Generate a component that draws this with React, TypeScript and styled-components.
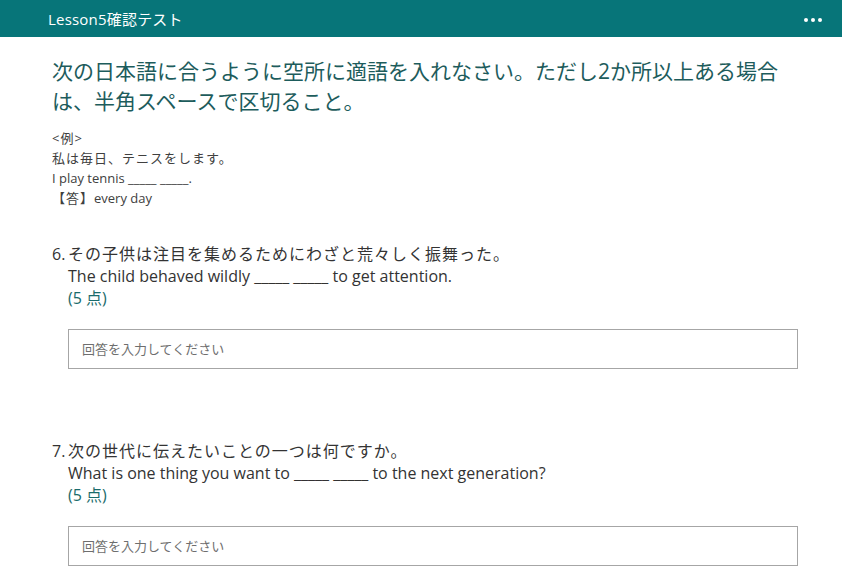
import React from 'react';
import styled, { createGlobalStyle } from 'styled-components';

const GlobalStyle = createGlobalStyle`
  html, body {
    margin: 0;
    padding: 0;
    background: #ffffff;
    font-family: "Segoe UI", "Open Sans", "Noto Sans CJK JP", sans-serif;
  }
`;

const Page = styled.div`
  width: 842px;
  min-height: 582px;
  overflow: hidden;
`;

const Header = styled.header`
  height: 37px;
  background: #077579;
  display: flex;
  align-items: center;
  justify-content: space-between;
  padding: 0 20px 0 48px;
  color: #ffffff;
`;

const Title = styled.div`
  font-size: 15px;
  letter-spacing: 0.2px;
`;

const MoreButton = styled.div`
  display: flex;
  gap: 3px;
  align-items: center;
  padding-top: 2px;
`;

const Dot = styled.span`
  width: 4px;
  height: 4px;
  border-radius: 50%;
  background: #ffffff;
`;

const Body = styled.main`
  padding: 19px 45px 0 52px;
`;

const Heading = styled.h1`
  margin: 0;
  font-size: 21px;
  font-weight: 400;
  line-height: 30px;
  color: #1d5c5c;
`;

const Example = styled.div`
  margin-top: 12px;
  font-size: 13px;
  line-height: 20px;
  color: #404040;
`;

const Ja = styled.span<{ $spacing?: number }>`
  letter-spacing: ${({ $spacing }) => $spacing ?? 1}px;
`;

const Question = styled.section`
  margin-top: 35px;
  & + & {
    margin-top: 71px;
  }
`;

const QuestionTitle = styled.div`
  display: flex;
  font-size: 16px;
  line-height: 22px;
  color: #333333;
`;

const Number = styled.span`
  width: 16px;
  flex-shrink: 0;
`;

const QuestionText = styled.div`
  display: flex;
  flex-direction: column;
`;

const Points = styled.span`
  color: #1a6b6b;
`;

const AnswerInput = styled.input`
  display: block;
  box-sizing: border-box;
  margin: 20px 0 0 16px;
  width: 730px;
  height: 40px;
  border: 1px solid #a6a6a6;
  padding: 0 13px;
  font-family: inherit;
  font-size: 13px;
  color: #333333;
  outline: none;
  &::placeholder {
    color: #6e6e6e;
  }
`;

const questions = [
  {
    n: 6,
    ja: 'その子供は注目を集めるためにわざと荒々しく振舞った。',
    en: 'The child behaved wildly _____ _____ to get attention.',
  },
  {
    n: 7,
    ja: '次の世代に伝えたいことの一つは何ですか。',
    en: 'What is one thing you want to _____ _____ to the next generation?',
  },
];

const App: React.FunctionComponent = () => {
  return (
    <Page>
      <GlobalStyle />
      <Header>
        <Title>Lesson5確認テスト</Title>
        <MoreButton>
          <Dot />
          <Dot />
          <Dot />
        </MoreButton>
      </Header>
      <Body>
        <Heading>
          次の日本語に合うように空所に適語を入れなさい。ただし2か所以上ある場合は、半角スペースで区切ること。
        </Heading>
        <Example>
          <div><Ja>&lt;例&gt;</Ja></div>
          <div><Ja>私は毎日、テニスをします。</Ja></div>
          <div>I play tennis _____ _____.</div>
          <div><Ja>【答】</Ja>every day</div>
        </Example>
        {questions.map((q) => (
          <Question key={q.n}>
            <QuestionTitle>
              <Number>{q.n}.</Number>
              <QuestionText>
                <Ja $spacing={1}>{q.ja}</Ja>
                <span>{q.en}</span>
                <Points>(5 点)</Points>
              </QuestionText>
            </QuestionTitle>
            <AnswerInput placeholder="回答を入力してください" />
          </Question>
        ))}
      </Body>
    </Page>
  );
};

export default App;
